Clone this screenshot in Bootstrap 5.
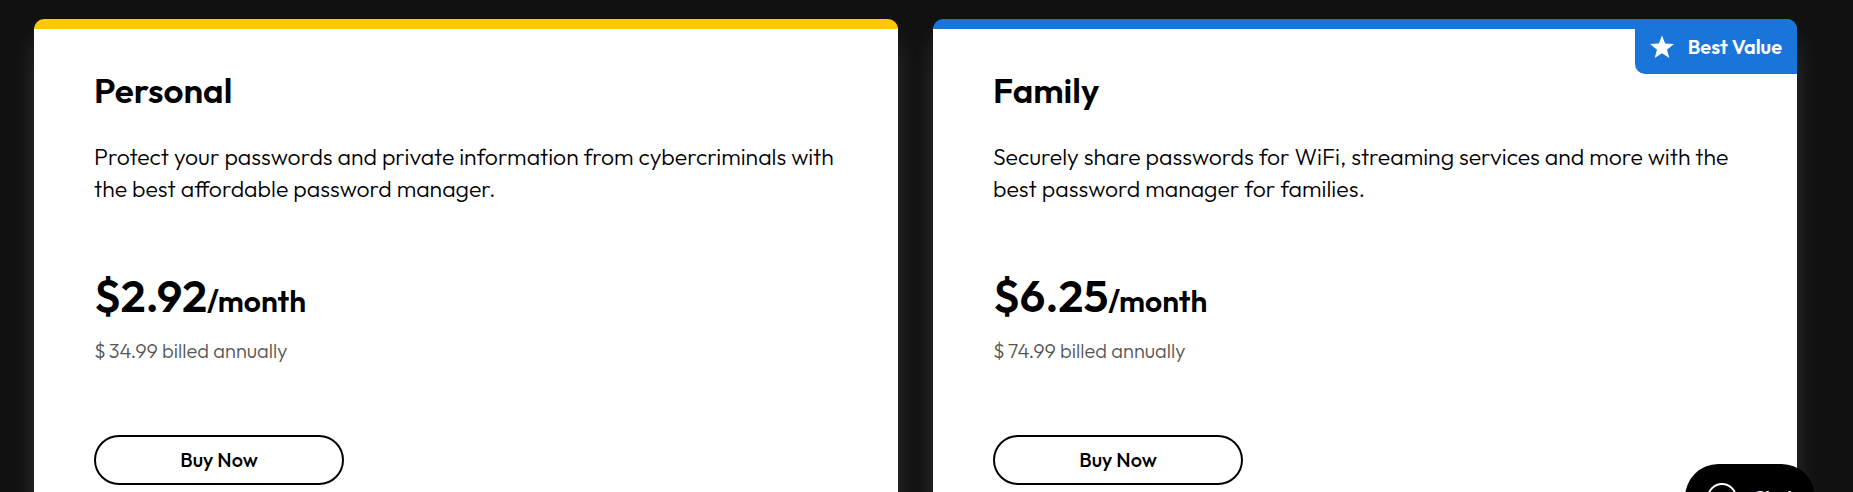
<!DOCTYPE html>
<html lang="en">
<head>
<meta charset="utf-8">
<meta name="viewport" content="width=device-width, initial-scale=1">
<title>Plans</title>
<link href="https://cdn.jsdelivr.net/npm/bootstrap@5.3.0/dist/css/bootstrap.min.css" rel="stylesheet">
<style>
body { background: #111; color: #000; font-family: Outfit, Lato, sans-serif; }
.plans { padding: 19px 56px 0 34px; gap: 35px; }
.plan { flex: 1 1 0; border: 0; border-top: 10px solid var(--accent); border-radius: 10px 10px 0 0; padding: 38px 50px 80px 60px; color: #000; box-shadow: 0 20px 24px rgba(255, 255, 255, .12); }
.plan-personal { --accent: #ffc800; }
.plan-family { --accent: #1a75db; }
.plan h2 { font-size: 35px; line-height: 46px; font-weight: 600; margin-bottom: 28px; }
.plan-text { font-size: 23px; line-height: 32px; font-weight: 300; margin-bottom: 63px; }
.price { font-size: 45px; line-height: 56px; font-weight: 600; margin-bottom: 12px; }
.per { font-size: 30px; }
.billed { font-size: 20px; line-height: 20px; font-weight: 300; color: #555; margin-bottom: 74px; }
.currency { margin-right: 3px; }
.btn-buy { width: 250px; height: 50px; border: 2px solid #000; font-size: 20px; font-weight: 500; color: #000; background: #fff; padding: 0; }
.best { background: var(--accent); color: #fff; height: 55px; margin-top: -10px; gap: 14px; padding: 0 15px; font-size: 20px; font-weight: 600; border-radius: 0 10px; }
.chat { bottom: -39px; right: 38px; width: 130px; height: 67px; border: 0; border-radius: 35px; background: #000; color: #fff; gap: 16px; font-size: 18px; font-weight: 600; }
</style>
</head>
<body class="vh-100 overflow-hidden">
<main class="plans d-flex">
  <section class="card plan plan-personal align-items-start">
    <h2>Personal</h2>
    <p class="plan-text">Protect your passwords and private information from cybercriminals with the best affordable password manager.</p>
    <p class="price">$2.92<span class="per">/month</span></p>
    <p class="billed"><span class="currency">$</span>34.99 billed annually</p>
    <button type="button" class="btn btn-buy rounded-pill">Buy Now</button>
  </section>
  <section class="card plan plan-family align-items-start">
    <div class="best position-absolute top-0 end-0 d-flex align-items-center">
      <svg width="24" height="24" viewBox="0 0 26 25" fill="#fff" aria-hidden="true"><path d="M13 0l3.4 8.6 9.6.7-7.6 6.1 2.6 9.1-8-5.2-8 5.2 2.6-9.1L0 9.300l9.600-.7z"/></svg>
      <span>Best Value</span>
    </div>
    <h2>Family</h2>
    <p class="plan-text">Securely share passwords for WiFi, streaming services and more with the best password manager for families.</p>
    <p class="price">$6.25<span class="per">/month</span></p>
    <p class="billed"><span class="currency">$</span>74.99 billed annually</p>
    <button type="button" class="btn btn-buy rounded-pill">Buy Now</button>
  </section>
</main>
<button type="button" class="chat position-fixed d-flex align-items-center justify-content-center">
  <svg width="30" height="30" viewBox="0 0 30 30" fill="none" stroke="#fff" stroke-width="2" aria-hidden="true"><circle cx="15" cy="15" r="14"/></svg>
  <span>Chat</span>
</button>
<script src="https://cdn.jsdelivr.net/npm/bootstrap@5.3.0/dist/js/bootstrap.bundle.min.js"></script>
</body>
</html>
